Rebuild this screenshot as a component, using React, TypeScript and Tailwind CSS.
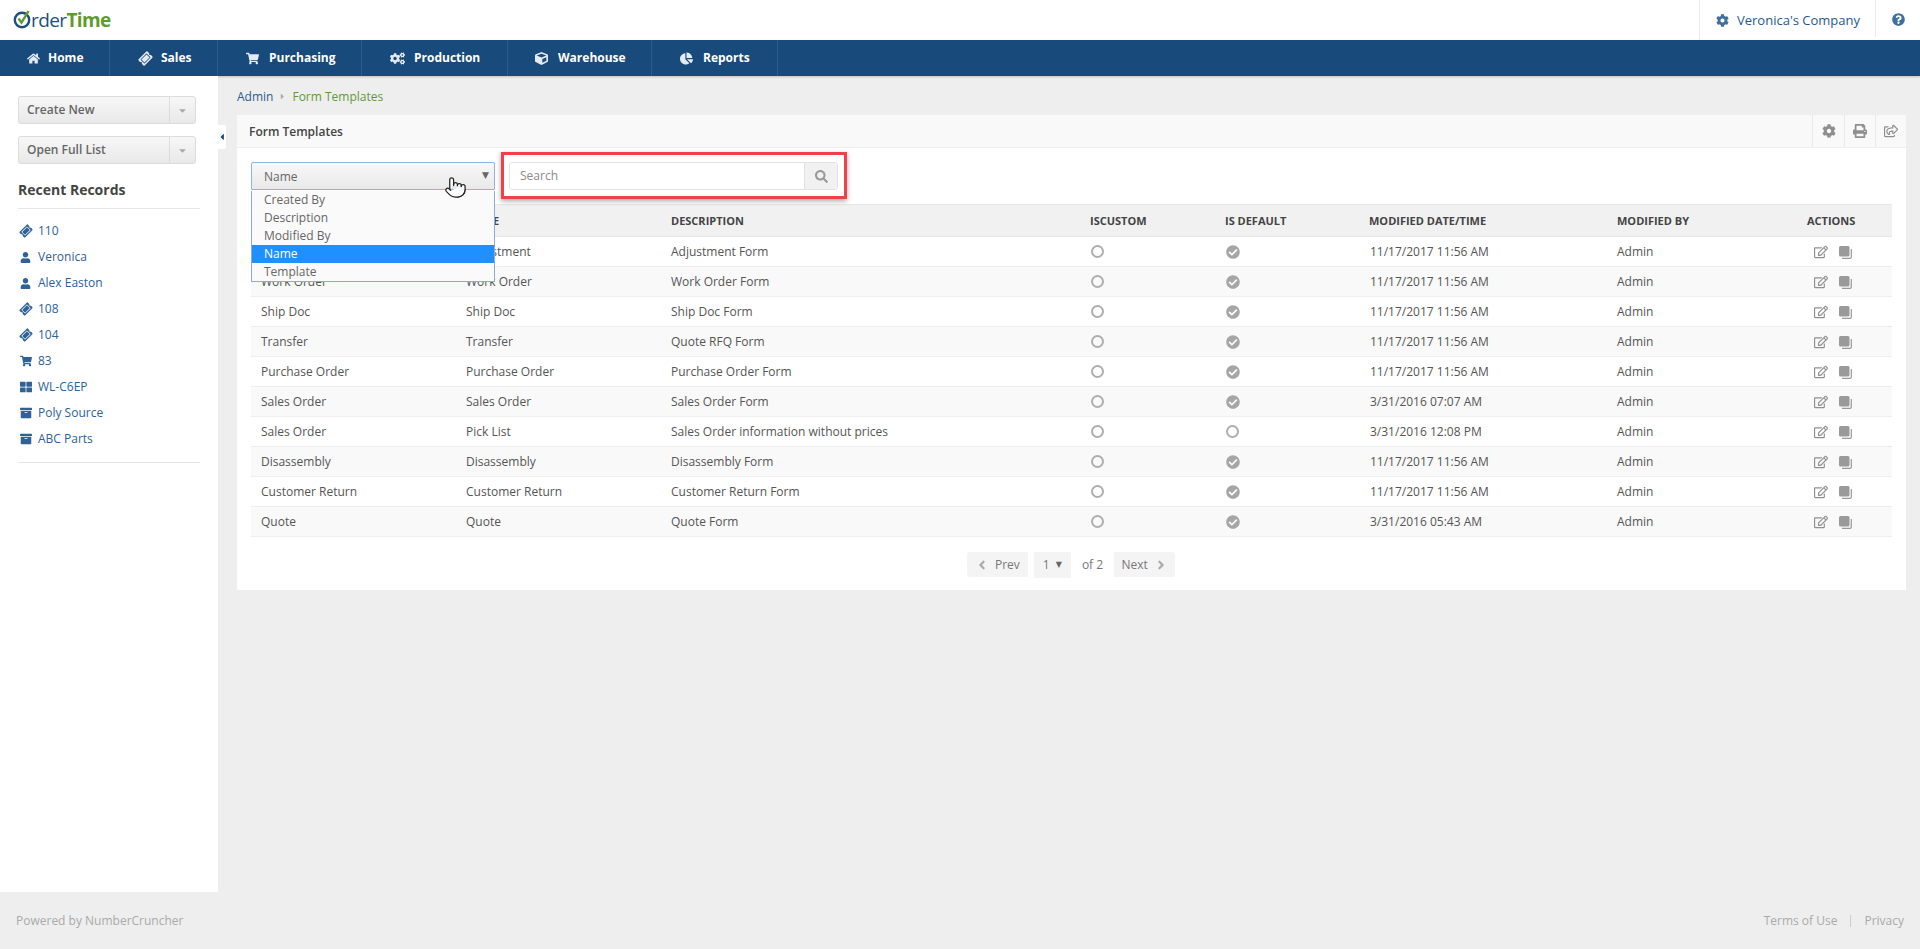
import React from 'react';
import { FaHome, FaTicketAlt, FaShoppingCart, FaCogs, FaCube, FaChartPie, FaUser, FaThLarge, FaArchive, FaCog, FaQuestionCircle, FaPrint, FaRegShareSquare, FaRegEdit, FaCheckCircle, FaSearch, FaCaretDown, FaCaretRight, FaCaretLeft, FaAngleLeft, FaAngleRight } from 'react-icons/fa';
import { Pointer } from 'lucide-react';

const navItems = [
  { label: 'Home', icon: <FaHome size={13} />, width: 'w-[110px]', pad: 'pl-[27px]', gap: 'gap-2' },
  { label: 'Sales', icon: <FaTicketAlt size={13} className="-rotate-45" />, width: 'w-[108px]', pad: 'pl-[29px]', gap: 'gap-[9px]' },
  { label: 'Purchasing', icon: <FaShoppingCart size={13} />, width: 'w-[144px]', pad: 'pl-7', gap: 'gap-2.5' },
  { label: 'Production', icon: <FaCogs size={15} />, width: 'w-[146px]', pad: 'pl-7', gap: 'gap-[9px]' },
  { label: 'Warehouse', icon: <FaCube size={13} />, width: 'w-[144px]', pad: 'pl-[27px]', gap: 'gap-2.5' },
  { label: 'Reports', icon: <FaChartPie size={13} />, width: 'w-[126px]', pad: 'pl-7', gap: 'gap-2.5' },
];

const recent = [
  { label: '110', icon: <FaTicketAlt size={12} className="-rotate-45" /> },
  { label: 'Veronica', icon: <FaUser size={11} /> },
  { label: 'Alex Easton', icon: <FaUser size={11} /> },
  { label: '108', icon: <FaTicketAlt size={12} className="-rotate-45" /> },
  { label: '104', icon: <FaTicketAlt size={12} className="-rotate-45" /> },
  { label: '83', icon: <FaShoppingCart size={12} /> },
  { label: 'WL-C6EP', icon: <FaThLarge size={12} /> },
  { label: 'Poly Source', icon: <FaArchive size={12} /> },
  { label: 'ABC Parts', icon: <FaArchive size={12} /> },
];

const rows = [
  ['Adjustment', 'Adjustment', 'Adjustment Form', true, '11/17/2017 11:56 AM'],
  ['Work Order', 'Work Order', 'Work Order Form', true, '11/17/2017 11:56 AM'],
  ['Ship Doc', 'Ship Doc', 'Ship Doc Form', true, '11/17/2017 11:56 AM'],
  ['Transfer', 'Transfer', 'Quote RFQ Form', true, '11/17/2017 11:56 AM'],
  ['Purchase Order', 'Purchase Order', 'Purchase Order Form', true, '11/17/2017 11:56 AM'],
  ['Sales Order', 'Sales Order', 'Sales Order Form', true, '3/31/2016 07:07 AM'],
  ['Sales Order', 'Pick List', 'Sales Order information without prices', false, '3/31/2016 12:08 PM'],
  ['Disassembly', 'Disassembly', 'Disassembly Form', true, '11/17/2017 11:56 AM'],
  ['Customer Return', 'Customer Return', 'Customer Return Form', true, '11/17/2017 11:56 AM'],
  ['Quote', 'Quote', 'Quote Form', true, '3/31/2016 05:43 AM'],
] as const;

const SideButton = ({ label }: { label: string }) => (
  <div className="flex h-7 w-[178px] items-center rounded-[3px] border border-[#dcdcdc] bg-gradient-to-b from-[#f7f7f7] to-[#e9e9e9] text-[12px] font-semibold text-[#666]">
    <span className="flex-1 pl-2">{label}</span>
    <span className="flex h-full w-[26px] items-center justify-center border-l border-[#dcdcdc] text-[#aaa]"><FaCaretDown size={11} /></span>
  </div>
);

const Logo = () => (
  <div className="flex items-center">
    <svg width="18" height="20" viewBox="0 0 18 20" className="mt-[-2px]">
      <circle cx="9" cy="11" r="7.2" fill="none" stroke="#1c4f80" strokeWidth="2.4" />
      <path d="M5.5 9.5l3 4L15.5 2" fill="none" stroke="#5e9c2e" strokeWidth="2.4" />
    </svg>
    <span className="text-[19px] leading-none tracking-[-0.6px] text-[#1c4f80]">rder</span>
    <span className="text-[19px] font-bold leading-none tracking-[-0.6px] text-[#5e9c2e]">Time</span>
  </div>
);

// hollow radio dot used in the iscustom / default columns
const Ring = () => <div className="size-[13px] rounded-full border-2 border-[#aeaeae]" />;

const CopyIcon = () => (
  <svg width="13" height="13" viewBox="0 0 13 13">
    <rect x="0" y="0" width="10.5" height="10.5" rx="1.5" fill="#9a9a9a" />
    <path d="M12.3 3v8a1.3 1.3 0 0 1-1.3 1.3H3" fill="none" stroke="#9a9a9a" strokeWidth="1.2" />
  </svg>
);

export default function App() {
  return (
    <div className="flex h-[949px] flex-col overflow-hidden bg-[#eeeeee] font-['Open_Sans',sans-serif] text-[12px] text-[#555]">
      <header className="flex h-10 shrink-0 items-center justify-between bg-white pl-[13px]">
        <Logo />
        <div className="flex h-full items-stretch">
          <div className="flex w-[176px] items-center gap-2 border-l border-[#eaeaea] pl-4 pt-[1px] text-[#1d5a94]">
            <FaCog size={13} className="text-[#3f6f9f]" />
            <span className="text-[13px]">Veronica's Company</span>
          </div>
          <div className="mb-[3px] flex w-[45px] items-center border-l border-[#eaeaea] pl-4 pt-[1px] text-[#3f6f9f]">
            <FaQuestionCircle size={13} />
          </div>
        </div>
      </header>

      <nav className="flex h-9 shrink-0 bg-[#184a7b] shadow-[0_1px_2px_rgba(0,0,0,0.2)]">
        {navItems.map((item) => (
          <div key={item.label} className={`flex items-center border-r border-[#2a5c8c] text-[12px] font-bold text-white ${item.width} ${item.pad} ${item.gap}`}>
            <span className="text-[#e4ebf2]">{item.icon}</span>
            <span>{item.label}</span>
          </div>
        ))}
      </nav>

      <div className="flex min-h-0 flex-1">
        <aside className="relative w-[218px] shrink-0 bg-white px-[18px] pt-5">
          <div className="flex flex-col gap-3">
            <SideButton label="Create New" />
            <SideButton label="Open Full List" />
          </div>
          <h2 className="mt-4 border-b border-[#e6e6e6] pb-2 text-[14px] font-bold leading-5 text-[#444]">Recent Records</h2>
          <ul className="border-b border-[#e6e6e6] pb-2.5 pt-[9px]">
            {recent.map((item) => (
              <li key={item.label} className="flex h-[26px] items-center text-[#2b6299]">
                <span className="flex w-5 justify-start pl-0.5 text-[#2f6296]">{item.icon}</span>
                <span>{item.label}</span>
              </li>
            ))}
          </ul>
          <div className="absolute left-full top-[49px] flex h-6 w-2 items-center justify-center rounded-r-[2px] bg-white text-[#184a7b]">
            <FaCaretLeft size={10} />
          </div>
        </aside>

        <main className="min-w-0 flex-1 pl-[19px] pr-[14px]">
          <div className="flex h-[39px] items-center gap-[5px] pt-0.5">
            <span className="text-[#2b5c8c]">Admin</span>
            <FaCaretRight size={9} className="text-[#aaa]" />
            <span className="text-[#5f9a3a]">Form Templates</span>
          </div>

          <section className="h-[475px] bg-white">
            <div className="flex h-[33px] items-stretch justify-between border-b border-[#eee] bg-[#f9f9f9] pl-3">
              <h1 className="self-center pt-[2px] text-[12px] font-semibold text-[#444]">Form Templates</h1>
              <div className="flex text-[#8f8f8f]">
                <span className="flex w-8 items-center justify-center border-l border-[#eaeaea]"><FaCog size={14} /></span>
                <span className="flex w-[31px] items-center justify-center border-l border-[#eaeaea]"><FaPrint size={14} /></span>
                <span className="flex w-[31px] items-center justify-center border-l border-[#eaeaea]"><FaRegShareSquare size={14} /></span>
              </div>
            </div>

            <div className="px-[14px]">
              <div className="flex h-[56px] items-start gap-[14px] pt-[14px]">
                <div className="relative w-[244px]">
                  <div className="flex h-7 items-center justify-between rounded-t-[2px] border border-[#8fb2e4] bg-gradient-to-b from-[#f8f8f8] to-[#e9e9e9] pl-3 pr-[5px] pt-[2px] text-[#666]">
                    <span>Name</span>
                    <span className="pb-[3px] font-['DejaVu_Sans',sans-serif] text-[9px] text-[#666]">▼</span>
                  </div>
                  <ul className="absolute left-0 top-[29px] z-10 w-full border border-t-0 border-[#8fa9d8] bg-[#fafafa] text-[#666]">
                    <li className="flex h-[18px] items-center pl-3">Created By</li>
                    <li className="flex h-[18px] items-center pl-3">Description</li>
                    <li className="flex h-[18px] items-center pl-3">Modified By</li>
                    <li className="flex h-[18px] items-center bg-[#1e90ff] pl-3 text-white">Name</li>
                    <li className="flex h-[18px] items-center pl-3">Template</li>
                  </ul>
                  <Pointer size={23} fill="#ffffff" strokeWidth={1.3} className="absolute left-[193px] top-[14px] z-20 text-[#222]" />
                </div>

                <div className="relative flex h-7 w-[329px] items-stretch rounded-[3px] border border-[#e2e2e2] bg-white">
                  <span className="flex flex-1 items-center pl-2.5 text-[#8a8a8a]">Search</span>
                  <span className="flex w-[33px] items-center justify-center rounded-r-[3px] border-l border-[#e2e2e2] bg-[#f1f1f1] text-[#999]"><FaSearch size={13} /></span>
                  <div className="pointer-events-none absolute -bottom-2.5 -left-[9px] -right-2.5 -top-[11px] border-[3px] border-[#f1404a] shadow-[0_2px_5px_rgba(0,0,0,0.35)]" />
                </div>
              </div>

              <table className="w-full table-fixed border-collapse">
                <thead>
                  <tr className="h-8 border-y border-[#e6e6e6] bg-[#f1f1f1] text-left text-[11px] font-bold text-[#444]">
                    <th className="w-[205px] pl-[10px] pt-[2px]">TYPE</th>
                    <th className="w-[205px] pl-[10px] pt-[2px]">NAME</th>
                    <th className="w-[420px] pl-[10px] pt-[2px]">DESCRIPTION</th>
                    <th className="w-[135px] pl-[9px] pt-[2px]">ISCUSTOM</th>
                    <th className="w-[144px] pl-[9px] pt-[2px]">IS DEFAULT</th>
                    <th className="w-[247px] pl-[9px] pt-[2px]">MODIFIED DATE/TIME</th>
                    <th className="w-[191px] pl-[10px] pt-[2px]">MODIFIED BY</th>
                    <th className="pl-[9px] pt-[2px]">ACTIONS</th>
                  </tr>
                </thead>
                <tbody>
                  {rows.map((row, i) => (
                    <tr key={row[0] + row[1]} className={`h-[30px] border-b border-[#eeeeee] ${i % 2 === 1 ? 'bg-[#f9f9f9]' : 'bg-white'}`}>
                      <td className="pl-[10px]">{row[0]}</td>
                      <td className="pl-[10px]">{row[1]}</td>
                      <td className="pl-[10px]">{row[2]}</td>
                      <td className="pl-[10px]"><Ring /></td>
                      <td className="pl-[10px] text-[#a6a6a6]">{row[3] ? <FaCheckCircle size={14} /> : <Ring />}</td>
                      <td className="pl-[10px]">{row[4]}</td>
                      <td className="pl-[10px]">Admin</td>
                      <td className="pl-[16px] text-[#8f8f8f]">
                        <div className="flex items-center gap-[11px] pt-[1px]"><FaRegEdit size={14} /><CopyIcon /></div>
                      </td>
                    </tr>
                  ))}
                </tbody>
              </table>

              <div className="flex items-start justify-center gap-[6px] pr-[1px] pt-[15px] text-[#777]">
                <span className="flex h-[25px] w-[61px] items-center justify-center gap-1.5 rounded-l-[3px] bg-[#f4f4f4]"><FaAngleLeft size={14} className="text-[#aaa]" />Prev</span>
                <span className="flex h-[26px] w-[37px] items-center justify-center gap-[6px] bg-[#f4f4f4]">1<span className="font-['DejaVu_Sans',sans-serif] text-[8px] text-[#666]">▼</span></span>
                <span className="flex h-[25px] items-center px-[5px]">of 2</span>
                <span className="flex h-[25px] w-[61px] items-center justify-center gap-1.5 rounded-r-[3px] bg-[#f4f4f4]">Next<FaAngleRight size={14} className="text-[#aaa]" /></span>
              </div>
            </div>
          </section>
        </main>
      </div>

      <footer className="flex h-[57px] shrink-0 items-center justify-between pl-4 pr-4 pt-[1px] text-[12px] text-[#aaa]">
        <span>Powered by NumberCruncher</span>
        <div className="flex items-center gap-[13px]">
          <span>Terms of Use</span>
          <span className="h-3 w-px bg-[#ccc]" />
          <span>Privacy</span>
        </div>
      </footer>
    </div>
  );
}
